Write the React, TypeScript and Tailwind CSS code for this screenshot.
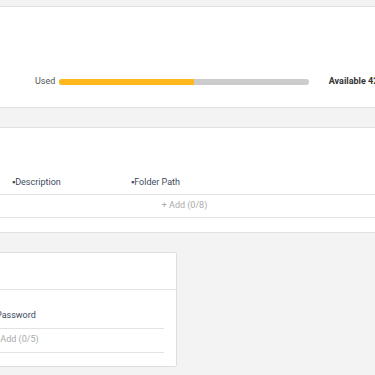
export default function App() {
  return (
    <div
      className="w-[375px] h-[375px] overflow-hidden bg-[#f3f3f3] flex flex-col"
      style={{ fontFamily: "Roboto, 'Liberation Sans', sans-serif" }}
    >
      {/* Card 1 */}
      <div className="mt-[6px] -mx-[10px] h-[102px] shrink-0 bg-white border-y border-[#e0e0e0] flex flex-col justify-end pb-[19px]">
        <div className="flex items-center h-[12px] pl-[45px]">
          <span className="text-[9px] text-[#555] w-[24px]">Used</span>
          <div className="w-[250px] h-[6px] rounded-full bg-[#cccccc] overflow-hidden flex">
            <div className="w-[135px] h-full bg-[#ffb81c]" />
          </div>
          <span className="ml-[20px] text-[9px] font-bold text-[#333] whitespace-nowrap">Available 42%</span>
        </div>
      </div>

      {/* Card 2 */}
      <div className="mt-[19px] -mx-[10px] h-[106px] shrink-0 bg-white border-y border-[#e0e0e0] flex flex-col">
        <div className="h-[44px]" />
        <div className="h-[23px] flex items-center border-b border-[#e3e3e3] text-[9px] text-[#3e4a5c]">
          <span className="ml-[22px] w-[119px]">▪Description</span>
          <span>▪Folder Path</span>
        </div>
        <div className="h-[23px] flex items-center justify-center border-b border-[#e3e3e3] text-[9px] text-[#aaa] pr-[6px]">
          + Add (0/8)
        </div>
      </div>

      {/* Card 3 */}
      <div className="mt-[19px] ml-[-20px] w-[197px] h-[115px] shrink-0 bg-white border border-[#dedede] rounded-[2px] flex flex-col">
        <div className="h-[37px] border-b border-[#e3e3e3]" />
        <div className="flex flex-col pr-[12px]">
          <div className="h-[39px] flex items-end pb-[6px] border-b border-[#e3e3e3] text-[9px] text-[#3e4a5c] pl-[15px]">
            Password
          </div>
          <div className="h-[24px] flex items-center border-b border-[#e3e3e3] text-[9px] text-[#aaa] pl-[12px] pb-[2px]">
            + Add (0/5)
          </div>
        </div>
      </div>
    </div>
  );
}
